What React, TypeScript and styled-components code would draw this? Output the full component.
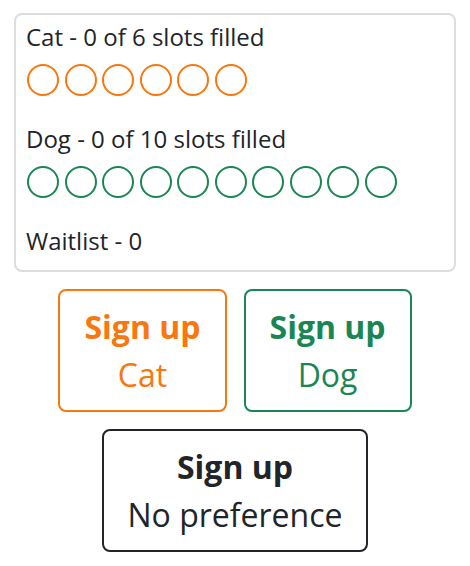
import { Component, ReactNode } from "react";
import styled, { createGlobalStyle } from "styled-components";

const colors = {
  text: "#212529",
  orange: "#f8780f",
  green: "#1b8654",
  border: "#dddddd",
};

const GlobalStyle = createGlobalStyle`
  body {
    margin: 0;
    background: #ffffff;
    font-family: "Open Sans", "Noto Sans", sans-serif;
    color: ${colors.text};
  }
`;

const Page = styled.div`
  width: 470px;
  padding: 13px 14px;
  box-sizing: border-box;
  display: flex;
  flex-direction: column;
  align-items: center;
  gap: 17px;
`;

const Card = styled.div`
  width: 100%;
  box-sizing: border-box;
  border: 2px solid ${colors.border};
  border-radius: 8px;
  padding: 4px 10px 11px;
  display: flex;
  flex-direction: column;
  gap: 25px;
`;

const Group = styled.div`
  display: flex;
  flex-direction: column;
  gap: 9px;
`;

const Label = styled.div`
  font-size: 24px;
  line-height: 36px;
`;

const Slots = styled.div`
  display: flex;
  gap: 5.5px;
  padding-left: 1px;
`;

const Slot = styled.div<{ color: string }>`
  width: 32px;
  height: 32px;
  box-sizing: border-box;
  border: 2px solid ${(props) => props.color};
  border-radius: 50%;
`;

const ButtonRow = styled.div`
  display: flex;
  justify-content: center;
  gap: 17px;
`;

const SignButton = styled.button<{ color: string }>`
  background: #ffffff;
  border: 2px solid ${(props) => props.color};
  border-radius: 8px;
  padding: 12px 24px 11px;
  color: ${(props) => props.color};
  font-family: "Open Sans", "Noto Sans", sans-serif;
  display: flex;
  flex-direction: column;
  align-items: center;
  cursor: pointer;
`;

const ButtonTitle = styled.span`
  font-size: 32px;
  font-weight: 700;
  line-height: 48px;
`;

const ButtonSub = styled.span`
  font-size: 32px;
  line-height: 48px;
`;

interface SlotGroupProps {
  name: string;
  total: number;
  filled: number;
  color: string;
}

class SlotGroup extends Component<SlotGroupProps> {
  render(): ReactNode {
    const { name, total, filled, color } = this.props;
    return (
      <Group>
        <Label>
          {name} - {filled} of {total} slots filled
        </Label>
        <Slots>
          {Array.from({ length: total }).map((_, i) => (
            <Slot key={i} color={color} />
          ))}
        </Slots>
      </Group>
    );
  }
}

interface SignUpProps {
  label: string;
  color: string;
}

class SignUp extends Component<SignUpProps> {
  render(): ReactNode {
    return (
      <SignButton color={this.props.color}>
        <ButtonTitle>Sign up</ButtonTitle>
        <ButtonSub>{this.props.label}</ButtonSub>
      </SignButton>
    );
  }
}

export default class App extends Component {
  render(): ReactNode {
    return (
      <>
        <GlobalStyle />
        <Page>
          <Card>
            <SlotGroup name="Cat" total={6} filled={0} color={colors.orange} />
            <SlotGroup name="Dog" total={10} filled={0} color={colors.green} />
            <Label>Waitlist - 0</Label>
          </Card>
          <ButtonRow>
            <SignUp label="Cat" color={colors.orange} />
            <SignUp label="Dog" color={colors.green} />
          </ButtonRow>
          <SignUp label="No preference" color={colors.text} />
        </Page>
      </>
    );
  }
}
